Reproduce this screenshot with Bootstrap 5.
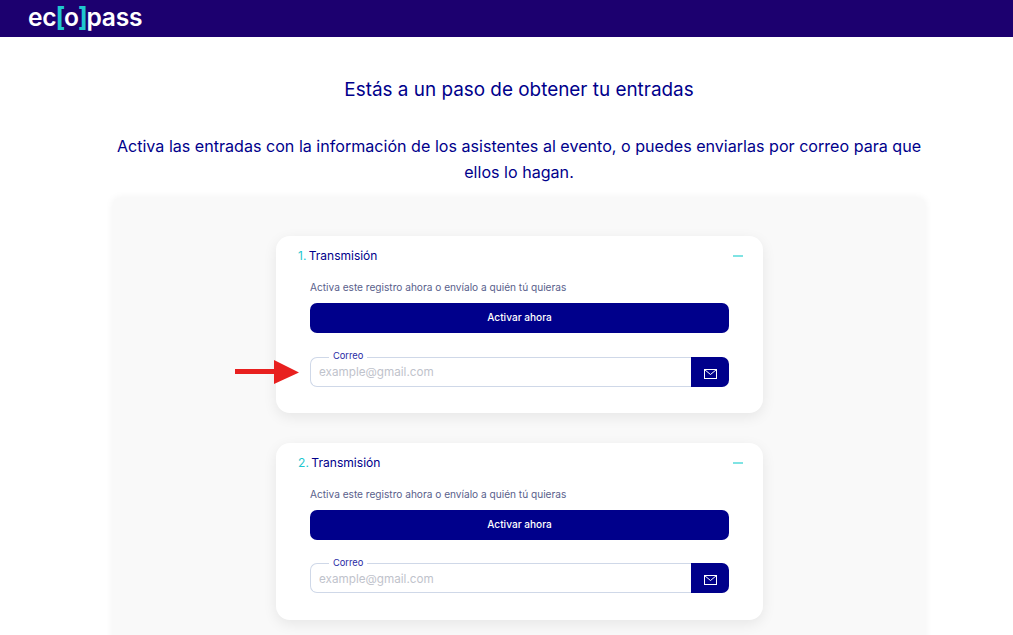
<!DOCTYPE html>
<html lang="es">
<head>
  <meta charset="UTF-8">
  <title>Ecopass - Entradas</title>
  <meta name="viewport" content="width=device-width, initial-scale=1">
  <link href="https://cdn.jsdelivr.net/npm/bootstrap@5.3.0/dist/css/bootstrap.min.css" rel="stylesheet">
  <style>
    body { font-family: "Inter", "Liberation Sans", sans-serif; background: #fff; overflow: hidden; height: 635px; }
    .top-bar { height: 37px; background: #1c006f; padding-left: 28px; }
    .brand-text { font-size: 24.6px; font-weight: 600; line-height: 33px; color: #fff; letter-spacing: -.2px; }
    .brand-text span { color: #1fc7cf; font-size: 26px; font-weight: 700; margin: 0 -1px; }
    .page-wrap { width: 812px; margin-left: 113px; }
    .page-title { font-size: 18.9px; line-height: 26px; font-weight: 400; color: #00008b; margin: 40px 0 0; }
    .page-text { font-size: 16.1px; line-height: 26px; color: #00008b; margin: 30px 0 0; }
    .events-panel { background: #f9f9f9; margin-top: 13px; padding: 38px 0 0 163px; border-radius: 6px 6px 0 0; box-shadow: 0 0 8px rgba(0,0,0,.06); height: 450px; }
    .ticket-card { width: 487px; height: 177px; background: #fff; border-radius: 14px; box-shadow: 0 4px 14px rgba(0,0,0,.08); padding: 11px 20px 0 22px; margin-bottom: 30px; }
    .ticket-head { font-size: 12px; line-height: 17px; color: #00008b; }
    .ticket-head.big { font-size: 12.1px; }
    .ticket-num { color: #1fc7cf; margin-right: -1px; }
    .ticket-head.big .ticket-num { margin-right: -1px; }
    .minus-mark { width: 10px; height: 2px; background: #7fe3e3; }
    .ticket-body { padding: 15px 14px 0 12px; }
    .hint-text { font-size: 10.12px; line-height: 16px; color: #5a5f8c; margin-bottom: 8px; }
    .btn-activate { background: #00008b; color: #fff; font-size: 10.1px; font-weight: 500; height: 30px; border-radius: 7px; border: 0; width: 100%; }
    .btn-activate:hover { background: #00008b; color: #fff; }
    .mail-group { margin-top: 24px; }
    .ticket-card + .ticket-card .mail-group { margin-top: 23px; }
    .mail-field { height: 30px; border: 1px solid #cfd8e8; border-right: 0; border-radius: 7px 0 0 7px; font-size: 11.7px; padding: 0 8px; box-shadow: none; }
    .ticket-card + .ticket-card .mail-field { padding-top: 2px; }
    .mail-field::placeholder { color: #bfc3cc; }
    .mail-label { position: absolute; left: 20px; top: -8px; background: #fff; padding: 0 4px; font-size: 9.3px; line-height: 14px; color: #2a2aa5; z-index: 5; }
    .ticket-card + .ticket-card .mail-label { top: -7px; }
    .mail-btn { width: 38px; height: 30px; background: #00008b; border: 0; border-radius: 0 7px 7px 0 !important; padding: 0; }
    .red-arrow { position: absolute; left: 235px; top: 360px; }
  </style>
</head>

<body>
  <header class="top-bar">
    <div class="brand-text">ec<span>[</span>o<span>]</span>pass</div>
  </header>

  <main class="page-wrap text-center">
    <h1 class="page-title">Estás a un paso de obtener tu entradas</h1>
    <p class="page-text">Activa las entradas con la información de los asistentes al evento, o puedes enviarlas por correo para que ellos lo hagan.</p>

    <div class="events-panel text-start">
      <!-- Ticket 1 -->
      <div class="ticket-card">
        <div class="ticket-head d-flex justify-content-between align-items-center">
          <div><span class="ticket-num">1.</span> Transmisión</div>
          <div class="minus-mark"></div>
        </div>
        <div class="ticket-body">
          <div class="hint-text">Activa este registro ahora o envíalo a quién tú quieras</div>
          <button type="button" class="btn btn-activate">Activar ahora</button>
          <div class="mail-group input-group position-relative">
            <input type="email" class="form-control mail-field" placeholder="example@gmail.com">
            <button type="button" class="btn mail-btn">
              <svg width="13" height="10" viewBox="0 0 13 10" fill="none" stroke="#fff"><rect x=".5" y=".5" width="12" height="9"/><path d="M.5 .5 6.5 5.5 12.5 .5"/></svg>
            </button>
            <label class="mail-label">Correo</label>
          </div>
        </div>
      </div>

      <!-- Ticket 2 -->
      <div class="ticket-card">
        <div class="ticket-head big d-flex justify-content-between align-items-center">
          <div><span class="ticket-num">2.</span> Transmisión</div>
          <div class="minus-mark"></div>
        </div>
        <div class="ticket-body">
          <div class="hint-text">Activa este registro ahora o envíalo a quién tú quieras</div>
          <button type="button" class="btn btn-activate">Activar ahora</button>
          <div class="mail-group input-group position-relative">
            <input type="email" class="form-control mail-field" placeholder="example@gmail.com">
            <button type="button" class="btn mail-btn">
              <svg width="13" height="10" viewBox="0 0 13 10" fill="none" stroke="#fff"><rect x=".5" y=".5" width="12" height="9"/><path d="M.5 .5 6.5 5.5 12.5 .5"/></svg>
            </button>
            <label class="mail-label">Correo</label>
          </div>
        </div>
      </div>
    </div>
  </main>

  <svg class="red-arrow" width="66" height="25" viewBox="0 0 66 25"><path d="M0 9H39V0L64 12.5 39 24V14H0Z" fill="#e8201f"/></svg>

  <script src="https://cdn.jsdelivr.net/npm/bootstrap@5.3.0/dist/js/bootstrap.bundle.min.js"></script>
</body>
</html>
